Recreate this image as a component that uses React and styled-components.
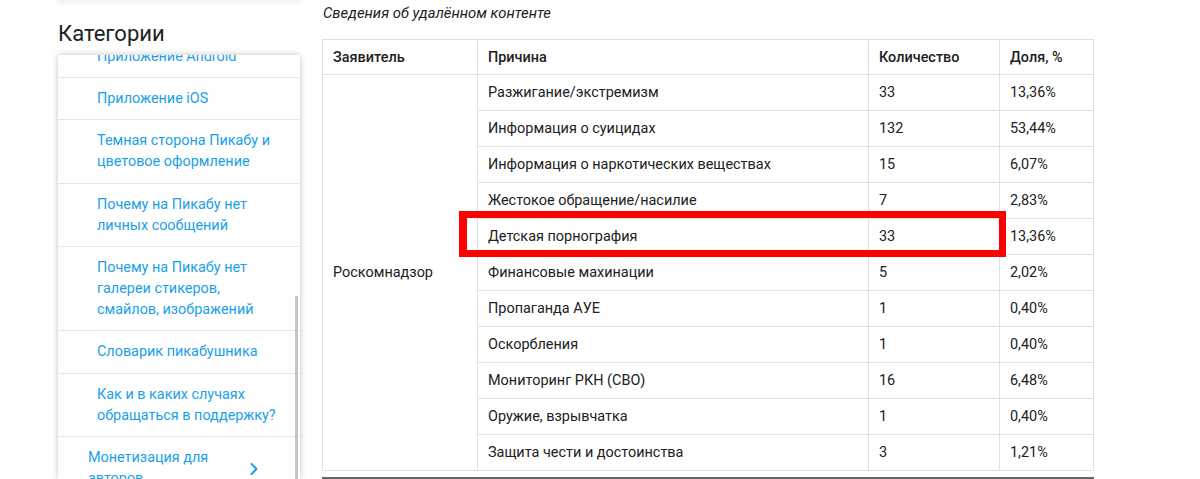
import React from "react";
import styled, { createGlobalStyle } from "styled-components";
import { ChevronRight } from "lucide-react";

const GlobalStyle = createGlobalStyle`
  html, body {
    margin: 0;
    height: 100%;
    background: #fff;
    overflow: hidden;
    font-family: Roboto, "Liberation Sans", sans-serif;
  }
`;

const Page = styled.div`
  width: 1200px;
  height: 479px;
  display: flex;
  gap: 22px;
  padding-left: 58px;
  box-sizing: border-box;
  overflow: hidden;
  position: relative;
`;

const Sidebar = styled.aside`
  width: 242px;
  flex: none;
  position: relative;
`;

// bottom edge of the card above, only its shadow is still on screen
const TopCard = styled.div`
  height: 0;
  box-shadow: 0 0 5px 1px rgba(0, 0, 0, 0.18);
`;

const SideTitle = styled.h3`
  margin: 0;
  padding-top: 20px;
  height: 35px;
  font-size: 22px;
  line-height: 28px;
  font-weight: 400;
  color: #212121;
`;

const MenuCard = styled.div`
  height: 424px;
  overflow: hidden;
  position: relative;
  background: #fff;
  border-radius: 2px 2px 0 0;
  box-shadow: 0 0 6px rgba(0, 0, 0, 0.25);
`;

const MenuList = styled.ul`
  list-style: none;
  margin: -19px 0 0;
  padding: 0;
`;

const MenuItem = styled.li`
  padding: ${(p) => (p.$top ? "10px 46px 0 30px" : "10px 20px 10px 39px")};
  border-bottom: 1px solid #e6e6e6;
  font-size: 14.4px;
  line-height: 21.15px;
  color: #1a9fe8;
  position: relative;
`;

const ItemArrow = styled(ChevronRight)`
  position: absolute;
  right: 36px;
  top: 22px;
  color: #1a9fe8;
`;

const ScrollThumb = styled.div`
  position: absolute;
  right: 2px;
  top: 241px;
  bottom: 0;
  width: 3px;
  background: #c4c4c4;
`;

const Main = styled.main`
  width: 772px;
  flex: none;
`;

const Caption = styled.p`
  margin: 0 0 0 1px;
  height: 39px;
  padding-top: 4px;
  box-sizing: border-box;
  font-size: 14.85px;
  line-height: 18px;
  font-style: italic;
  color: #222;
`;

const Table = styled.table`
  width: 771px;
  table-layout: fixed;
  border-collapse: collapse;
  font-size: 14.45px;
  color: #212121;
`;

const Row = styled.tr`
  height: ${(p) => (p.$head ? "35px" : "36px")};
`;

const HeadCell = styled.th`
  border: 1px solid #e0e0e0;
  padding: 0 10px;
  text-align: left;
  font-weight: 500;
`;

const Cell = styled.td`
  border: 1px solid #e0e0e0;
  padding: 0 10px;
`;

const Highlight = styled.div`
  position: absolute;
  left: 459px;
  top: 211px;
  width: 547px;
  height: 46px;
  box-sizing: border-box;
  border: 7px solid #ff0000;
  border-left-width: 8px;
  pointer-events: none;
`;

const BottomRule = styled.div`
  position: absolute;
  left: 322px;
  width: 772px;
  top: 477px;
  height: 2px;
  background: #666;
`;

const menu = [
  "Приложение Android",
  "Приложение iOS",
  "Темная сторона Пикабу и цветовое оформление",
  "Почему на Пикабу нет личных сообщений",
  "Почему на Пикабу нет галереи стикеров, смайлов, изображений",
  "Словарик пикабушника",
  "Как и в каких случаях обращаться в поддержку?",
];

const rows = [
  ["Разжигание/экстремизм", "33", "13,36%"],
  ["Информация о суицидах", "132", "53,44%"],
  ["Информация о наркотических веществах", "15", "6,07%"],
  ["Жестокое обращение/насилие", "7", "2,83%"],
  ["Детская порнография", "33", "13,36%"],
  ["Финансовые махинации", "5", "2,02%"],
  ["Пропаганда АУЕ", "1", "0,40%"],
  ["Оскорбления", "1", "0,40%"],
  ["Мониторинг РКН (СВО)", "16", "6,48%"],
  ["Оружие, взрывчатка", "1", "0,40%"],
  ["Защита чести и достоинства", "3", "1,21%"],
];

export default function App() {
  return (
    <Page>
      <GlobalStyle />
      <Sidebar>
        <TopCard />
        <SideTitle>Категории</SideTitle>
        <MenuCard>
          <MenuList>
            {menu.map((m) => (
              <MenuItem key={m}>{m}</MenuItem>
            ))}
            <MenuItem $top>
              Монетизация для авторов
              <ItemArrow size={20} strokeWidth={2.5} />
            </MenuItem>
          </MenuList>
          <ScrollThumb />
        </MenuCard>
      </Sidebar>
      <Main>
        <Caption>Сведения об удалённом контенте</Caption>
        <Table>
          <colgroup>
            <col width="155" />
            <col width="391" />
            <col width="131" />
            <col width="94" />
          </colgroup>
          <thead>
            <Row $head>
              <HeadCell>Заявитель</HeadCell>
              <HeadCell>Причина</HeadCell>
              <HeadCell>Количество</HeadCell>
              <HeadCell>Доля, %</HeadCell>
            </Row>
          </thead>
          <tbody>
            {rows.map((r, i) => (
              <Row key={r[0]}>
                {i === 0 && <Cell rowSpan={rows.length}>Роскомнадзор</Cell>}
                <Cell>{r[0]}</Cell>
                <Cell>{r[1]}</Cell>
                <Cell>{r[2]}</Cell>
              </Row>
            ))}
          </tbody>
        </Table>
      </Main>
      <Highlight />
      <BottomRule />
    </Page>
  );
}
